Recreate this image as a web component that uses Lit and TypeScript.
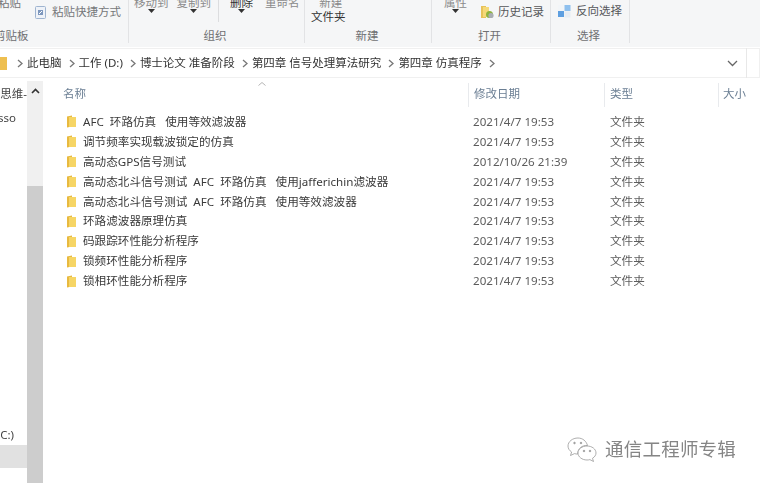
import { LitElement, html, css, svg } from "lit";
import { customElement } from "lit/decorators.js";

const rows: [string, string][] = [
  ["AFC\u00a0\u00a0环路仿真\u00a0\u00a0\u00a0使用等效滤波器", "2021/4/7 19:53"],
  ["调节频率实现载波锁定的仿真", "2021/4/7 19:53"],
  ["高动态GPS信号测试", "2012/10/26 21:39"],
  ["高动态北斗信号测试\u00a0\u00a0AFC\u00a0\u00a0环路仿真\u00a0\u00a0\u00a0使用jafferichin滤波器", "2021/4/7 19:53"],
  ["高动态北斗信号测试\u00a0\u00a0AFC\u00a0\u00a0环路仿真\u00a0\u00a0\u00a0使用等效滤波器", "2021/4/7 19:53"],
  ["环路滤波器原理仿真", "2021/4/7 19:53"],
  ["码跟踪环性能分析程序", "2021/4/7 19:53"],
  ["锁频环性能分析程序", "2021/4/7 19:53"],
  ["锁相环性能分析程序", "2021/4/7 19:53"],
];

const crumbs = ["此电脑", "工作 (D:)", "博士论文 准备阶段", "第四章 信号处理算法研究", "第四章 仿真程序"];

const folder = svg`<svg class="folder" width="9" height="13" viewBox="0 0 9 13"><path d="M0 1.5 L5 0.5 L5 11.5 L0 12.5Z" fill="#e8b93f"/><path d="M2 2 H9 V12 H2Z" fill="#f6d565"/></svg>`;
const caret = svg`<svg class="caret" width="7" height="4" viewBox="0 0 7 4"><path d="M0 0H7L3.5 4Z" fill="#333"/></svg>`;
const chev = svg`<svg class="chev" width="6" height="9" viewBox="0 0 6 9"><path d="M1 1L5 4.5L1 8" fill="none" stroke="#777" stroke-width="1.3"/></svg>`;

@customElement("app-root")
export class AppRoot extends LitElement {
  static styles = css`
    :host {
      display: block;
      width: 760px;
      height: 483px;
      overflow: hidden;
      background: #fff;
      font: 11.5px/16px "Noto Sans", "Noto Sans CJK SC", sans-serif;
      color: #3c3c3c;
      position: relative;
    }
    .blurred { filter: blur(0.5px); height: 483px; display: flex; flex-direction: column; }

    .ribbon { height: 47px; flex: none; background: #f5f6f7; display: flex; overflow: hidden; white-space: nowrap; }
    .group { flex: none; height: 43px; display: flex; flex-direction: column; box-shadow: inset -1px 0 0 #e2e3e5; }
    .body { height: 28px; flex: none; display: flex; align-items: flex-start; overflow: hidden; }
    .label { flex: none; height: 15px; text-align: center; color: #6f7072; line-height: 15px; }
    .g1 { width: 129px; } .g2 { width: 176px; } .g3 { width: 127px; } .g4 { width: 119px; } .g5 { width: 79px; }
    .g1 .label { text-align: left; margin-left: -6px; }
    .g2 .label { padding-right: 4px; }
    .g3 .label { padding-right: 3px; }
    .g4 .label { padding-right: 4px; }
    .g5 .label { padding-right: 4px; }

    .stack { display: flex; flex-direction: column; align-items: center; flex: none; }
    .up { margin-top: -5px; }
    .dim { color: #8a8a8a; }
    .dark { color: #333; }
    .caret { display: block; margin-top: -2px; }
    .inline { display: flex; align-items: center; gap: 6px; flex: none; }

    .paste { margin-left: -2px; color: #777; }
    .shortcut { margin-left: 14px; margin-top: 4px; color: #76787a; }
    .g2 .body { padding-left: 5px; }
    .move { margin-right: 8px; }
    .vsep { width: 1px; height: 22px; background: #dcdddf; margin: 0 11px 0 7px; flex: none; }
    .rename { margin-left: 12px; }
    .g3 .body { padding-left: 6px; }
    .new-top { padding-left: 5px; }
    .second { margin-top: -2px; }
    .g3 .stack { margin-top: -5px; }
    .g4 .body { padding-left: 12px; }
    .g4 .inline { margin-left: 14px; margin-top: 4px; gap: 4px; color: #55575a; }
    .g5 .body { padding-left: 7px; }
    .g5 .inline { margin-top: 3px; gap: 5px; color: #55575a; }

    .gap1 { height: 1px; flex: none; }
    .address { height: 30px; flex: none; display: flex; align-items: center; box-shadow: inset 0 0 0 1px #f0f0f0; margin-left: -2px; }
    .tab { width: 9px; height: 13px; background: #eebf50; flex: none; }
    .crumb { display: flex; align-items: center; flex: none; color: #333; white-space: nowrap; }
    .crumb .chev { margin: 0 4px 0 7px; }
    .first .chev { margin-left: 10px; }
    .tail { flex: 1; }
    .dropdown { margin-right: 8px; flex: none; }
    .refresh { width: 1px; height: 30px; background: #e8e8e8; flex: none; margin-right: 13px; }
    .gap2 { height: 3px; flex: none; }

    .main { flex: 1; display: flex; min-height: 0; }
    .side { width: 27px; flex: none; overflow: hidden; display: flex; flex-direction: column; color: #444; }
    .clip { display: flex; justify-content: flex-end; white-space: nowrap; height: 16px; flex: none; }
    .s1 { margin-top: 5px; } .s2 { margin-top: 8px; width: 16px; } .s3 { margin-top: 301px; width: 14px; }
    .sel { height: 23px; margin-top: 2px; background: #e1e1e1; flex: none; }
    .scroll { width: 16px; flex: none; background: #f0f0f0; display: flex; flex-direction: column; align-items: center; }
    .scroll svg { margin-top: 7px; flex: none; }
    .thumb { margin-top: 92px; width: 16px; flex: 1; background: #cdcdcd; }

    .files { flex: 1; min-width: 0; overflow: hidden; }
    .head { height: 24px; display: flex; color: #6a7e93; margin-top: 2px; }
    .head > div { flex: none; box-sizing: border-box; padding-top: 3px; white-space: nowrap; }
    .c1 { width: 425px; padding-left: 20px; position: relative; }
    .c2 { width: 136px; padding-left: 5px; border-left: 1px solid #e8eaed; }
    .c3 { width: 114px; padding-left: 5px; border-left: 1px solid #e8eaed; }
    .c4 { width: 60px; padding-left: 4px; border-left: 1px solid #e8eaed; }
    .sort { position: absolute; left: 215px; top: -1px; }
    .list { padding-top: 5px; font-size: 11.6px; }
    .row { height: 19.9px; display: flex; align-items: center; white-space: nowrap; }
    .name { width: 425px; flex: none; display: flex; align-items: center; padding-left: 24px; box-sizing: border-box; color: #3a3a3a; }
    .folder { flex: none; margin-right: 7px; }
    .date { width: 142px; flex: none; padding-left: 5px; box-sizing: border-box; color: #5c5c5c; }
    .type { color: #5c5c5c; flex: none; }

    .mark { position: absolute; right: 24px; top: 436px; display: flex; align-items: center; gap: 8px; color: #858585; font-size: 18.5px; line-height: 26px; letter-spacing: 0.2px; text-shadow: 1px 0 0 #fff; }
    .mark svg { flex: none; }
  `;

  render() {
    return html`
      <div class="blurred">
        <div class="ribbon">
          <div class="group g1">
            <div class="body">
              <div class="stack up paste"><span>粘贴</span></div>
              <div class="inline shortcut">
                <svg width="11" height="13" viewBox="0 0 11 13"><rect x=".5" y=".5" width="10" height="12" rx="1" fill="#eef2f8" stroke="#9fb4d0"/><path d="M3 4h5v5H3z" fill="#7d97bd"/><path d="M4 8l3-3" stroke="#fff"/></svg>
                <span>粘贴快捷方式</span>
              </div>
            </div>
            <div class="label">剪贴板</div>
          </div>
          <div class="group g2">
            <div class="body">
              <div class="stack up dim move"><span>移动到</span>${caret}</div>
              <div class="stack up dim"><span>复制到</span>${caret}</div>
              <div class="vsep"></div>
              <div class="stack up dark"><span>删除</span>${caret}</div>
              <div class="stack up dim rename"><span>重命名</span></div>
            </div>
            <div class="label">组织</div>
          </div>
          <div class="group g3">
            <div class="body">
              <div class="stack"><span class="dim new-top">新建</span><span class="second dark">文件夹</span></div>
            </div>
            <div class="label">新建</div>
          </div>
          <div class="group g4">
            <div class="body">
              <div class="stack up dim"><span>属性</span>${caret}</div>
              <div class="inline">
                <svg width="13" height="14" viewBox="0 0 13 14"><path d="M0 1h5v12H0z" fill="#e7c25a"/><path d="M2 2h6v10H2z" fill="#f5d978"/><circle cx="8.5" cy="9.5" r="3.5" fill="#8db33f"/><circle cx="10" cy="10.5" r="2.6" fill="#a9aeb3"/></svg>
                <span>历史记录</span>
              </div>
            </div>
            <div class="label">打开</div>
          </div>
          <div class="group g5">
            <div class="body">
              <div class="inline">
                <svg width="13" height="13" viewBox="0 0 13 13"><rect x="0" y="6" width="6" height="6" fill="#5e9fe0"/><rect x="6.5" y="0" width="6" height="6" fill="#8fc0ee"/><rect x="6.5" y="6.5" width="6" height="6" fill="#e8edf3"/><rect x="0" y="0" width="6" height="6" fill="#f2f5f8"/></svg>
                <span>反向选择</span>
              </div>
            </div>
            <div class="label">选择</div>
          </div>
        </div>
        <div class="gap1"></div>
        <div class="address">
          <div class="tab"></div>
          ${crumbs.map((c, i) => html`<div class="crumb ${i === 0 ? "first" : ""}">${chev}<span>${c}</span></div>`)}
          <div class="crumb">${chev}</div>
          <div class="tail"></div>
          <svg class="dropdown" width="11" height="7" viewBox="0 0 11 7"><path d="M1 1L5.5 5.5L10 1" fill="none" stroke="#666" stroke-width="1.3"/></svg>
          <div class="refresh"></div>
        </div>
        <div class="gap2"></div>
        <div class="main">
          <div class="side">
            <div class="clip s1"><span>思维-</span></div>
            <div class="clip s2"><span>sso</span></div>
            <div class="clip s3"><span>C:)</span></div>
            <div class="sel"></div>
          </div>
          <div class="scroll">
            <svg width="9" height="6" viewBox="0 0 9 6"><path d="M1 5L4.5 1.5L8 5" fill="none" stroke="#333" stroke-width="1.6"/></svg>
            <div class="thumb"></div>
          </div>
          <div class="files">
            <div class="head">
              <div class="c1">名称
                <svg class="sort" width="8" height="4" viewBox="0 0 8 4"><path d="M0.5 3.5L4 0.5L7.5 3.5" fill="none" stroke="#b5b5b5"/></svg>
              </div>
              <div class="c2">修改日期</div>
              <div class="c3">类型</div>
              <div class="c4">大小</div>
            </div>
            <div class="list">
              ${rows.map(
                ([n, d]) => html`<div class="row">
                  <div class="name">${folder}<span>${n}</span></div>
                  <div class="date">${d}</div>
                  <div class="type">文件夹</div>
                </div>`
              )}
            </div>
          </div>
        </div>
      </div>
      <div class="mark">
        <svg width="30" height="26" viewBox="0 0 30 26" fill="#fff" stroke="#999" stroke-width=".8">
          <path d="M11 2C5.500 2 1 5.600 1 10c0 2.500 1.400 4.600 3.600 6L3.500 19.500 7.500 17.600c1 .3 2.100.5 3.200.5C10.600 12.600 15 9 20.500 9.500 19.400 5.200 15.600 2 11 2Z"/>
          <path d="M20 10c-4.900 0-9 3.100-9 7s4.100 7 9 7c1 0 2-.1 2.900-.4L26.500 25.500 25.500 22.300C27.700 21 29 19.100 29 17c0-3.900-4-7-9-7Z"/>
          <circle cx="7.500" cy="7" r=".8" fill="#888"/><circle cx="14" cy="7" r=".8" fill="#888"/>
          <circle cx="17" cy="15" r=".8" fill="#888"/><circle cx="23" cy="15" r=".8" fill="#888"/>
        </svg>
        <span>通信工程师专辑</span>
      </div>
    `;
  }
}
